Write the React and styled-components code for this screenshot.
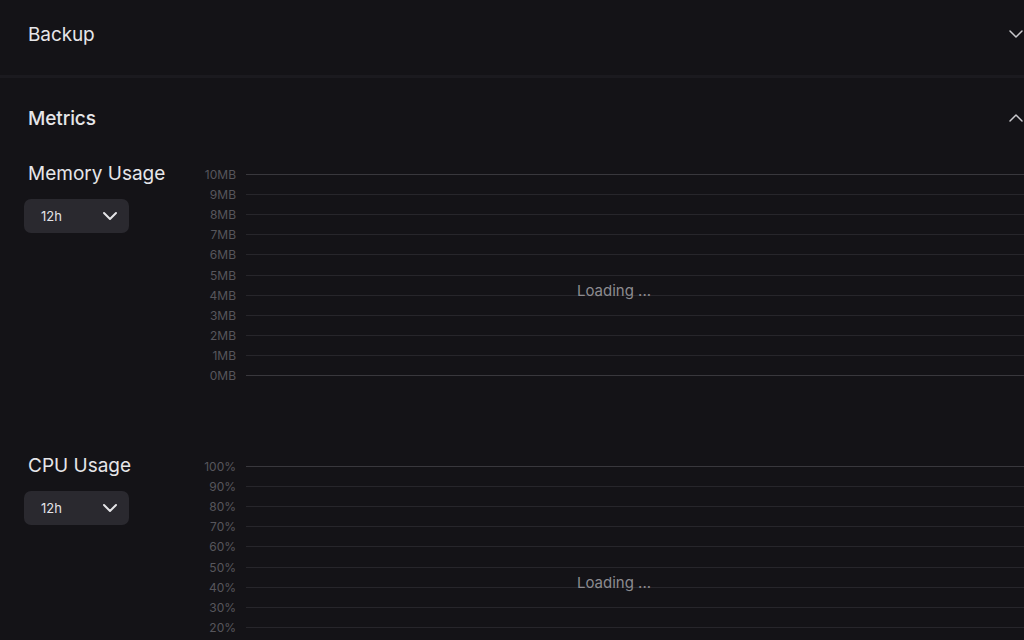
import React from "react";
import styled, { createGlobalStyle } from "styled-components";
import { ChevronDown, ChevronUp } from "lucide-react";

const Global = createGlobalStyle`
  html, body { margin: 0; padding: 0; background: #141317; overflow: hidden; }
  body { font-family: Inter, "Noto Sans", sans-serif; color: #e4e4e7; }
`;

const Page = styled.div`
  width: 1024px;
  min-height: 640px;
  background: #141317;
  overflow: hidden;
`;

const SectionHeader = styled.div`
  display: flex;
  align-items: center;
  justify-content: space-between;
  height: ${(p) => p.$h}px;
  padding: 0 0 0 28px;
  margin-bottom: ${(p) => p.$mb || 0}px;
`;

const SectionTitle = styled.h2`
  margin: 0;
  font-size: 19px;
  font-weight: ${(p) => p.$weight || 400};
  color: #e6e6e9;
  letter-spacing: -0.1px;
`;

const Toggle = styled.span`
  display: flex;
  color: #c9c9cd;
  margin-right: -4px;
`;

const Divider = styled.div`
  height: 3px;
  background: #1b1a1f;
`;

const MetricsBody = styled.div`
  display: flex;
  flex-direction: column;
  gap: 68px;
  padding: 4px 0 0 28px;
`;

const MetricBlock = styled.div`
  display: grid;
  grid-template-columns: 168px 1fr;
  align-items: start;
  margin-right: -8px;
`;

const Side = styled.div`
  display: flex;
  flex-direction: column;
  align-items: flex-start;
`;

const MetricTitle = styled.div`
  font-size: 19px;
  line-height: 24px;
  color: #e6e6e9;
  font-weight: 400;
`;

const Select = styled.div`
  margin-top: 13px;
  margin-left: -4px;
  width: 105px;
  height: 34px;
  box-sizing: border-box;
  border-radius: 7px;
  background: #2a292f;
  display: flex;
  align-items: center;
  justify-content: space-between;
  padding: 0 7px 0 17px;
  font-size: 13px;
  color: #e4e4e7;
`;

const Chart = styled.div`
  position: relative;
  margin-top: 2px;
  display: flex;
  flex-direction: column;
`;

const TickRow = styled.div`
  display: flex;
  align-items: center;
  height: 20.2px;
`;

const TickLabel = styled.span`
  width: 40px;
  text-align: right;
  font-size: 12px;
  color: #57565c;
  margin-right: 10px;
  flex-shrink: 0;
`;

const GridLine = styled.div`
  flex: 1;
  height: 1px;
  background: ${(p) => (p.$edge ? "#39383d" : "#27262b")};
`;

const Loading = styled.div`
  position: absolute;
  left: 0;
  right: 0;
  top: ${(p) => p.$top}px;
  text-align: center;
  font-size: 15px;
  color: #8c8b90;
`;

function Metric({ title, ticks, loadingTop }) {
  return (
    <MetricBlock>
      <Side>
        <MetricTitle>{title}</MetricTitle>
        <Select>
          <span>12h</span>
          <ChevronDown size={24} strokeWidth={2} color="#e4e4e7" />
        </Select>
      </Side>
      <Chart>
        {ticks.map((t, i) => (
          <TickRow key={t}>
            <TickLabel>{t}</TickLabel>
            <GridLine $edge={i === 0 || i === ticks.length - 1} />
          </TickRow>
        ))}
        <Loading $top={loadingTop}>Loading ...</Loading>
      </Chart>
    </MetricBlock>
  );
}

export default function App() {
  const mem = ["10MB", "9MB", "8MB", "7MB", "6MB", "5MB", "4MB", "3MB", "2MB", "1MB", "0MB"];
  const cpu = ["100%", "90%", "80%", "70%", "60%", "50%", "40%", "30%", "20%", "10%", "0%"];
  return (
    <Page>
      <Global />
      <SectionHeader $h={68} $mb={7}>
        <SectionTitle>Backup</SectionTitle>
        <Toggle>
          <ChevronDown size={24} strokeWidth={1.5} />
        </Toggle>
      </SectionHeader>
      <Divider />
      <SectionHeader $h={80}>
        <SectionTitle $weight={500}>Metrics</SectionTitle>
        <Toggle>
          <ChevronUp size={24} strokeWidth={1.5} />
        </Toggle>
      </SectionHeader>
      <MetricsBody>
        <Metric title="Memory Usage" ticks={mem} loadingTop={117} />
        <Metric title="CPU Usage" ticks={cpu} loadingTop={117} />
      </MetricsBody>
    </Page>
  );
}
